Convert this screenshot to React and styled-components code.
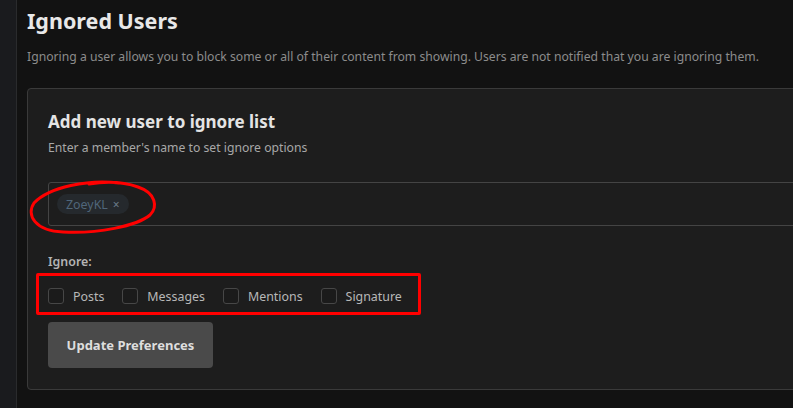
import styled, { createGlobalStyle } from "styled-components";

const GlobalStyle = createGlobalStyle`
  html, body {
    margin: 0;
    padding: 0;
    background: #121212;
    overflow: hidden;
  }
  body {
    font-family: "Noto Sans", "Open Sans", sans-serif;
  }
`;

const Page = styled.div`
  display: flex;
  height: 100vh;
  background: #121212;
`;

const Rail = styled.div`
  flex: 0 0 16px;
  background: #1a1b1e;
  border-right: 1px solid #2a2b2d;
`;

const Main = styled.main`
  flex: 0 0 800px;
  padding: 6px 0 0 10px;
`;

const PageTitle = styled.h1`
  margin: 0;
  font-size: 21.5px;
  line-height: 30px;
  font-weight: 700;
  color: #e8e8e8;
`;

const PageDesc = styled.p`
  margin: 12px 0 0;
  font-size: 12.2px;
  line-height: 18px;
  color: #8c8c8c;
  white-space: nowrap;
`;

const Card = styled.section`
  margin-top: 22px;
  padding: 20px 20px 21px;
  background: #1d1d1d;
  border: 1px solid #3a3a3a;
  border-radius: 4px;
`;

const CardTitle = styled.h2`
  margin: 0;
  font-size: 17px;
  line-height: 26px;
  font-weight: 700;
  color: #e4e4e4;
`;

const CardHint = styled.p`
  margin: 4px 0 0;
  font-size: 12.2px;
  line-height: 18px;
  color: #a8a8a8;
`;

const TokenField = styled.div`
  position: relative;
  margin-top: 25px;
  height: 42px;
  display: flex;
  align-items: center;
  padding: 0 8px;
  border: 1px solid #444;
  border-radius: 3px;
`;

const Chip = styled.span`
  display: inline-flex;
  align-items: center;
  gap: 5px;
  height: 20px;
  padding: 0 9px;
  border-radius: 10px;
  background: #25292d;
  color: #50667a;
  font-size: 12.4px;
`;

const ChipClose = styled.span`
  color: #6a7a88;
  font-size: 12px;
`;

const FieldLabel = styled.div`
  margin-top: 27px;
  font-size: 12.4px;
  line-height: 18px;
  font-weight: 600;
  color: #b4b4b4;
`;

const OptionRow = styled.div`
  position: relative;
  display: flex;
  align-items: center;
  gap: 18px;
  margin-top: 16px;
  height: 18px;
`;

const Option = styled.label`
  display: flex;
  align-items: center;
  gap: 9px;
  font-size: 12.4px;
  color: #b8b8b8;
`;

const Box = styled.span`
  width: 14px;
  height: 14px;
  border: 1px solid #474747;
  border-radius: 3px;
  background: #1b1b1b;
`;

const Button = styled.button`
  margin-top: 17px;
  width: 165px;
  height: 46px;
  border: none;
  border-radius: 4px;
  background: #4a4a4a;
  color: #dedede;
  font-family: inherit;
  font-size: 13px;
  font-weight: 700;
  cursor: pointer;
`;

const Scribble = styled.svg`
  position: absolute;
  left: -22px;
  top: -4px;
  overflow: visible;
  pointer-events: none;
`;

const Outline = styled.div`
  position: absolute;
  left: -12px;
  top: -14px;
  width: 379px;
  height: 36px;
  border: 3px solid #ff0000;
  border-radius: 2px;
  pointer-events: none;
`;

const options = ["Posts", "Messages", "Mentions", "Signature"];

export default function App() {
  return (
    <>
      <GlobalStyle />
      <Page>
        <Rail />
        <Main>
          <PageTitle>Ignored Users</PageTitle>
          <PageDesc>
            Ignoring a user allows you to block some or all of their content from showing. Users are not notified that you are ignoring them.
          </PageDesc>
          <Card>
            <CardTitle>Add new user to ignore list</CardTitle>
            <CardHint>Enter a member's name to set ignore options</CardHint>
            <TokenField>
              <Chip>
                ZoeyKL <ChipClose>×</ChipClose>
              </Chip>
              <Scribble width="130" height="56" viewBox="0 0 130 56">
                <path
                  d="M92 4 C62 0 22 8 7 24 C-1 36 8 52 36 53 C70 55 110 47 123 36 C131 28 129 14 111 8 C97 3 80 2 62 5"
                  fill="none"
                  stroke="#ff0000"
                  strokeWidth="3"
                  strokeLinecap="round"
                />
              </Scribble>
            </TokenField>
            <FieldLabel>Ignore:</FieldLabel>
            <OptionRow>
              {options.map((o) => (
                <Option key={o}>
                  <Box />
                  {o}
                </Option>
              ))}
              <Outline />
            </OptionRow>
            <Button>Update Preferences</Button>
          </Card>
        </Main>
      </Page>
    </>
  );
}
